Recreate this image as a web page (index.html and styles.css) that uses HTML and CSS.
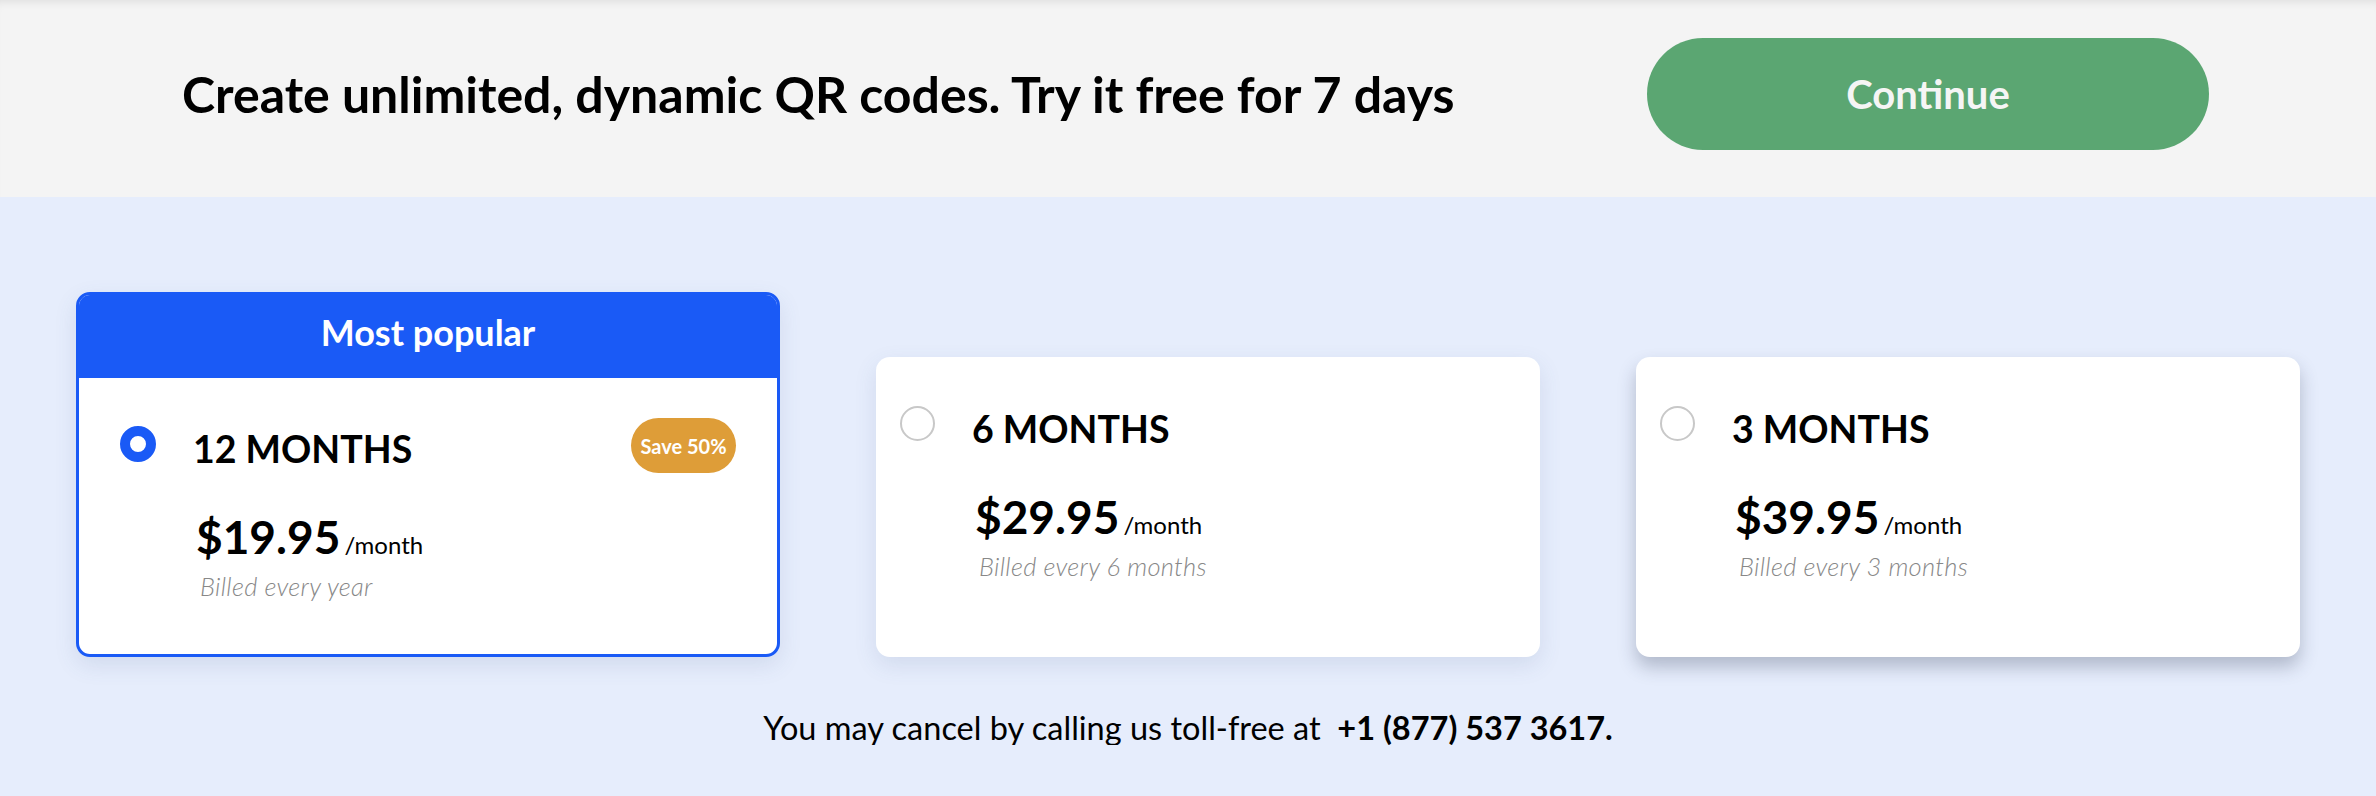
FILE: index.html
```html
<!DOCTYPE html>
<html lang="en">
<head>
    <meta charset="UTF-8">
    <meta name="viewport" content="width=device-width, initial-scale=1.0">
    <title>Choose your plan</title>
    <link rel="stylesheet" href="styles.css">
</head>
<body>
    <header class="trial-bar">
        <p class="trial-text">Create unlimited, dynamic QR codes. Try it free for 7 days</p>
        <button class="continue-btn">Continue</button>
    </header>

    <main class="plans">
        <div class="plan-row">
            <div class="plan plan-popular">
                <div class="plan-head">Most popular</div>
                <div class="plan-body">
                    <span class="radio radio-on"></span>
                    <div class="plan-info">
                        <div class="plan-title">12 MONTHS</div>
                        <div class="plan-price"><span class="amount">$19.95</span> <span class="per">/month</span></div>
                        <div class="plan-billed">Billed every year</div>
                    </div>
                    <span class="save-tag">Save 50%</span>
                </div>
            </div>

            <div class="plan">
                <div class="plan-body">
                    <span class="radio"></span>
                    <div class="plan-info">
                        <div class="plan-title">6 MONTHS</div>
                        <div class="plan-price"><span class="amount">$29.95</span> <span class="per">/month</span></div>
                        <div class="plan-billed">Billed every 6 months</div>
                    </div>
                </div>
            </div>

            <div class="plan plan-hover">
                <div class="plan-body">
                    <span class="radio"></span>
                    <div class="plan-info">
                        <div class="plan-title">3 MONTHS</div>
                        <div class="plan-price"><span class="amount">$39.95</span> <span class="per">/month</span></div>
                        <div class="plan-billed">Billed every 3 months</div>
                    </div>
                </div>
            </div>
        </div>

        <p class="cancel-note">You may cancel by calling us toll-free at &nbsp;<b>+1 (877) 537 3617.</b></p>
    </main>
</body>
</html>
```

FILE: styles.css
```css
body {
    margin: 0;
    font-family: Lato, "Open Sans", sans-serif;
    color: #000;
    background: #e6edfc;
}

.trial-bar {
    display: flex;
    align-items: center;
    height: 197px;
    box-sizing: border-box;
    padding: 0 167px 10px 182px;
    background: #f4f4f4;
    box-shadow: inset 0 8px 8px -6px rgba(0, 0, 0, 0.09);
}

.trial-text {
    margin: 0;
    font-size: 50px;
    font-weight: 700;
    line-height: 1;
}

.continue-btn {
    margin-left: auto;
    width: 562px;
    height: 112px;
    border: none;
    border-radius: 56px;
    background: #5ba672;
    color: #f5f5f5;
    font-family: inherit;
    font-size: 40px;
    font-weight: 700;
    cursor: pointer;
}

.plans {
    padding-top: 95px;
}

.plan-row {
    display: flex;
    align-items: flex-end;
    justify-content: center;
    gap: 96px;
}

.plan {
    width: 664px;
    height: 300px;
    box-sizing: border-box;
    background: #fff;
    border-radius: 14px;
    box-shadow: 0 8px 22px rgba(70, 90, 140, 0.13);
}

.plan-hover {
    box-shadow: 0 10px 18px rgba(40, 50, 80, 0.28);
}

.plan-popular {
    width: 704px;
    height: 365px;
    display: flex;
    flex-direction: column;
    border: 3px solid #1a5af6;
    overflow: hidden;
}

.plan-head {
    height: 83px;
    display: flex;
    align-items: center;
    justify-content: center;
    padding-bottom: 9px;
    box-sizing: border-box;
    background: #1a5af6;
    color: #fff;
    font-size: 36px;
    font-weight: 700;
}

.plan-body {
    display: flex;
    align-items: flex-start;
    padding: 49px 24px 0;
}

.plan-popular .plan-body {
    padding: 48px 41px 0;
}

.radio {
    flex: none;
    width: 35px;
    height: 35px;
    box-sizing: border-box;
    border: 2px solid #c8c8c8;
    border-radius: 50%;
}

.radio-on {
    width: 36px;
    height: 36px;
    border: 10.5px solid #1a5af6;
}

.plan-info {
    margin-left: 37px;
}

.plan-title {
    margin-top: 4px;
    font-size: 37.5px;
    font-weight: 700;
    line-height: 1;
}

.plan-price {
    margin-top: 46px;
    margin-left: 3px;
    line-height: 1;
}

.amount {
    font-size: 46px;
    font-weight: 700;
}

.per {
    font-size: 24px;
}

.plan-billed {
    margin-top: 14px;
    margin-left: 7px;
    font-size: 25.5px;
    font-style: italic;
    font-weight: 300;
    letter-spacing: 0.3px;
    color: #888;
    line-height: 1;
}

.save-tag {
    margin: -8px 0 0 auto;
    width: 105px;
    height: 55px;
    display: flex;
    align-items: center;
    justify-content: center;
    border-radius: 28px;
    background: #de9d38;
    color: #fff;
    font-size: 20px;
    font-weight: 700;
}

.cancel-note {
    margin: 55px 0 0;
    text-align: center;
    font-size: 32.5px;
    line-height: 1;
}

.cancel-note b {
    font-weight: 700;
}
```
